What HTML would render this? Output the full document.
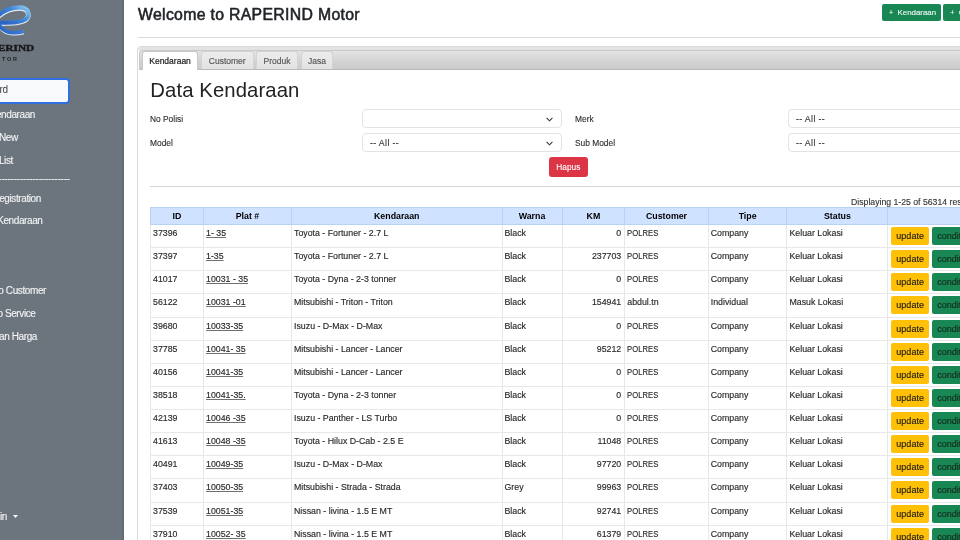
<!DOCTYPE html>
<html><head><meta charset="utf-8">
<style>
*{box-sizing:border-box;margin:0;padding:0}
html,body{width:960px;height:540px;overflow:hidden;background:#fff;will-change:transform;font-family:"Liberation Sans",sans-serif;color:#212529}
.abs{position:absolute}
#sb{position:absolute;left:0;top:0;width:124px;height:540px;background:#6c757d}
#sb .edge{position:absolute;left:122px;top:0;width:2px;height:540px;background:#656b73}
.si{position:absolute;color:#f3f4f5;-webkit-text-stroke:0.12px #f3f4f5;font-size:10px;letter-spacing:-0.4px;white-space:nowrap;line-height:12px;text-align:right}
#title{position:absolute;left:138px;top:4.5px;font-size:15.8px;font-weight:normal;letter-spacing:0.32px;-webkit-text-stroke:0.55px #212529;color:#212529;white-space:nowrap;line-height:20px}
.hr{position:absolute;height:1px;background:#dcdcdc}
.gbtn{position:absolute;top:3.8px;height:17px;background:#198754;border-radius:2px;color:#eef8f2;-webkit-text-stroke:0.12px #eef8f2;font-size:7.9px;line-height:17.6px;white-space:nowrap;overflow:hidden}
.gbtn i{font-style:normal;display:inline-block;width:8.5px;font-size:7px}
#tabs{position:absolute;left:137px;top:46px;width:840px;height:520px;border:1px solid #d9d9d9;border-radius:4px 0 0 0;background:#fff}
#tstrip{position:absolute;left:0;top:0;width:840px;height:3px;background:#e3e3e3;border-radius:3px 0 0 0}
#thead{position:absolute;left:0.8px;top:2.5px;width:840px;height:20.5px;border-radius:3px 0 0 0;background:linear-gradient(#e4e4e4 0%,#d2d2d2 60%,#cbcbcb 100%);border:1px solid #c9c9c9;border-bottom-color:#bababa;border-right:none}
.tab{position:absolute;top:0.3px;height:18.2px;border:1px solid #d3d3d3;border-bottom:none;border-radius:3px 3px 0 0;background:linear-gradient(#ececec,#e2e2e2);color:#555;font-size:8.5px;line-height:18px;text-align:center;white-space:nowrap;-webkit-text-stroke:0.15px #555}
.tab.act{background:#fff;border-color:#c8c8c8;color:#212121;height:19.5px;-webkit-text-stroke:0.2px #212121}
#dk{position:absolute;left:150.3px;top:77.5px;font-size:20.3px;letter-spacing:0.1px;color:#222;white-space:nowrap;line-height:24px}
.lbl{position:absolute;font-size:8.4px;color:#2a2a2a;white-space:nowrap;line-height:10px;-webkit-text-stroke:0.1px #2a2a2a}
.sel{position:absolute;height:19px;border:1px solid #e3e3e3;border-radius:4px;background:#fff;font-size:8.8px;letter-spacing:0.35px;color:#333;line-height:18px;padding-left:7px;white-space:nowrap;-webkit-text-stroke:0.1px #333}
.chev{position:absolute;right:8.5px;top:7px;width:7px;height:5px}
#hapus{position:absolute;left:549px;top:157.3px;width:38.7px;height:19.5px;border-radius:3px;background:#dc3545;color:#fff;font-size:8.3px;line-height:20.5px;-webkit-text-stroke:0.1px #fff;text-align:center}
#disp{position:absolute;left:851px;top:197px;font-size:8.7px;color:#333;-webkit-text-stroke:0.12px #333;white-space:nowrap;line-height:10px}
table{position:absolute;left:150px;top:207px;width:857.5px;border-collapse:collapse;table-layout:fixed;font-size:8.8px;color:#2a2a2a}
th{background:#cfe2ff;border:1px solid #b9d3f7;height:17px;font-weight:bold;text-align:center;color:#000;padding:0;line-height:15px}
td{-webkit-text-stroke:0.15px #2a2a2a;border:1px solid #e8e8e8;height:23.13px;vertical-align:top;padding:3px 2px 0 2px;line-height:10px;white-space:nowrap;overflow:hidden}
td a{color:#2a2a2a;text-decoration:underline;text-decoration-color:#707070;text-decoration-thickness:0.8px;text-decoration-skip-ink:none;text-underline-offset:0.6px}
td.r{text-align:right;padding-right:3px}
.pol{display:inline-block;transform:scaleX(0.865);transform-origin:0 0;letter-spacing:0.1px}
td.b{padding:2px 0 0 2.7px}
.upd{display:inline-block;width:38px;height:18px;background:#ffc107;border-radius:2px;color:#1e1a0a;font-size:9px;line-height:18px;text-align:center;vertical-align:top}
.cnd{display:inline-block;width:50px;height:18px;background:#198754;border-radius:2px;color:#0a2a17;font-size:9px;line-height:18px;margin-left:3px;padding-left:5px;vertical-align:top}
</style></head><body>
<div id="sb">
  <div class="edge"></div>
  <svg class="abs" style="left:0;top:0" width="124" height="70" viewBox="0 0 124 70">
    <defs>
      <linearGradient id="lg" x1="0" y1="0.6" x2="1" y2="0"><stop offset="0" stop-color="#2a64c4"/><stop offset="0.55" stop-color="#3f86d8"/><stop offset="1" stop-color="#8ccbf0"/></linearGradient>
      <linearGradient id="lg2" x1="0" y1="0" x2="1" y2="0"><stop offset="0" stop-color="#2d66c2"/><stop offset="1" stop-color="#3c7ad2"/></linearGradient>
    </defs>
    <path d="M-3 17.6 C4 11 12 8.3 20 8.3 C26 8.3 28.8 11.8 28.3 15.8 C27.8 20 23 22.2 16 22.9 C10 23.4 3 23.5 -3 23.7" stroke="#e4ebf3" stroke-width="4.8" fill="none"/>
    <path d="M-3 16.6 C4 10 12 7.4 20 7.4 C26 7.4 29 11.1 28.5 15.3 C28 19.5 23 21.4 16 22.1 C10 22.6 3 22.7 -3 22.9" stroke="url(#lg)" stroke-width="4.1" fill="none"/>
    <path d="M-1 25 C2 30.3 7 33.2 12.5 33.4 C16.5 33.6 20 33.2 23.7 32.2" stroke="#e4ebf3" stroke-width="4.3" fill="none"/>
    <path d="M-1.3 24.3 C1.8 29.6 6.8 32.4 12.5 32.6 C16.5 32.8 20 32.4 23.7 31.4" stroke="url(#lg2)" stroke-width="3.7" fill="none"/>
    <text x="-2.3" y="50.9" textLength="36.6" lengthAdjust="spacingAndGlyphs" font-family="Liberation Serif" font-weight="bold" font-size="8.8" fill="#15181c" stroke="#15181c" stroke-width="0.35">ERIND</text>
    <text x="18.7" y="61" text-anchor="end" font-family="Liberation Sans" font-weight="bold" font-size="5.5" fill="#1d2126" letter-spacing="1.7">MOTOR</text>
  </svg>
  <div class="abs" style="left:-4px;top:78px;width:73.5px;height:26px;border:2px solid #2f6fe0;border-radius:4px;background:#f8f9fa"></div>
  <div class="si" style="left:-0.5px;top:84px;color:#222;text-align:left">rd</div>
  <div class="si r" style="right:89px;top:109px">Kendaraan</div>
  <div class="si" style="left:-1.1px;top:132px;text-align:left">New</div>
  <div class="si" style="left:-1.1px;top:155px;text-align:left">List</div>
  <div class="si r" style="right:54px;top:173px;letter-spacing:-0.2px">-----------------------------------</div>
  <div class="si" style="left:-0.8px;top:193px;text-align:left">egistration</div>
  <div class="si r" style="right:81.5px;top:215px">Kendaraan</div>
  <div class="si r" style="right:78px;top:285px">Info Customer</div>
  <div class="si r" style="right:88.5px;top:308px">Info Service</div>
  <div class="si r" style="right:87px;top:331px">Perubahan Harga</div>
  <div class="si" style="left:0px;top:511px;text-align:left">in</div>
  <svg class="abs" style="left:13px;top:514.5px" width="6" height="4"><path d="M0 0 H5 L2.5 3 Z" fill="#f8f9fa"/></svg>
</div>

<div id="title">Welcome to RAPERIND Motor</div>
<div class="gbtn" style="left:882px;width:59.3px;padding-left:7px"><i>+</i>Kendaraan</div>
<div class="gbtn" style="left:943.3px;width:50px;padding-left:7px"><i>+</i>Customer</div>
<div class="hr" style="left:138px;top:37px;width:822px"></div>

<div id="tabs">
  <div id="tstrip"></div>
  <div id="thead">
    <div class="tab act" style="left:2px;width:56.5px">Kendaraan</div>
    <div class="tab" style="left:61px;width:52.8px">Customer</div>
    <div class="tab" style="left:116px;width:42.5px">Produk</div>
    <div class="tab" style="left:161px;width:32.2px">Jasa</div>
  </div>
</div>
<div id="dk">Data Kendaraan</div>

<div class="lbl" style="left:150px;top:114.2px">No Polisi</div>
<div class="lbl" style="left:150px;top:138.2px">Model</div>
<div class="lbl" style="left:575px;top:114.2px">Merk</div>
<div class="lbl" style="left:575px;top:138.2px">Sub Model</div>
<div class="sel" style="left:362px;top:109px;width:200px"><svg class="chev" viewBox="0 0 7 5"><path d="M0.6 0.8 L3.5 3.8 L6.4 0.8" stroke="#333" stroke-width="1.1" fill="none"/></svg></div>
<div class="sel" style="left:362px;top:133px;width:200px">-- All --<svg class="chev" viewBox="0 0 7 5"><path d="M0.6 0.8 L3.5 3.8 L6.4 0.8" stroke="#333" stroke-width="1.1" fill="none"/></svg></div>
<div class="sel" style="left:788px;top:109px;width:200px">-- All --</div>
<div class="sel" style="left:788px;top:133px;width:200px">-- All --</div>
<div id="hapus">Hapus</div>
<div class="hr" style="left:150px;top:186px;width:810px;background:#d4d4d4"></div>
<div id="disp">Displaying 1-25 of 56314 results</div>

<table>
<colgroup><col style="width:53px"><col style="width:88px"><col style="width:210.5px"><col style="width:60px"><col style="width:62.75px"><col style="width:83.5px"><col style="width:78.7px"><col style="width:101px"><col style="width:120px"></colgroup>
<tr><th>ID</th><th>Plat #</th><th>Kendaraan</th><th>Warna</th><th>KM</th><th>Customer</th><th>Tipe</th><th>Status</th><th></th></tr>
<tr><td>37396</td><td><a>1- 35</a></td><td>Toyota - Fortuner - 2.7 L</td><td>Black</td><td class="r">0</td><td><span class="pol">POLRES</span></td><td>Company</td><td>Keluar Lokasi</td><td class="b"><span class="upd">update</span><span class="cnd">condition</span></td></tr>
<tr><td>37397</td><td><a>1-35</a></td><td>Toyota - Fortuner - 2.7 L</td><td>Black</td><td class="r">237703</td><td><span class="pol">POLRES</span></td><td>Company</td><td>Keluar Lokasi</td><td class="b"><span class="upd">update</span><span class="cnd">condition</span></td></tr>
<tr><td>41017</td><td><a>10031 - 35</a></td><td>Toyota - Dyna - 2-3 tonner</td><td>Black</td><td class="r">0</td><td><span class="pol">POLRES</span></td><td>Company</td><td>Keluar Lokasi</td><td class="b"><span class="upd">update</span><span class="cnd">condition</span></td></tr>
<tr><td>56122</td><td><a>10031 -01</a></td><td>Mitsubishi - Triton - Triton</td><td>Black</td><td class="r">154941</td><td>abdul.tn</td><td>Individual</td><td>Masuk Lokasi</td><td class="b"><span class="upd">update</span><span class="cnd">condition</span></td></tr>
<tr><td>39680</td><td><a>10033-35</a></td><td>Isuzu - D-Max - D-Max</td><td>Black</td><td class="r">0</td><td><span class="pol">POLRES</span></td><td>Company</td><td>Keluar Lokasi</td><td class="b"><span class="upd">update</span><span class="cnd">condition</span></td></tr>
<tr><td>37785</td><td><a>10041- 35</a></td><td>Mitsubishi - Lancer - Lancer</td><td>Black</td><td class="r">95212</td><td><span class="pol">POLRES</span></td><td>Company</td><td>Keluar Lokasi</td><td class="b"><span class="upd">update</span><span class="cnd">condition</span></td></tr>
<tr><td>40156</td><td><a>10041-35</a></td><td>Mitsubishi - Lancer - Lancer</td><td>Black</td><td class="r">0</td><td><span class="pol">POLRES</span></td><td>Company</td><td>Keluar Lokasi</td><td class="b"><span class="upd">update</span><span class="cnd">condition</span></td></tr>
<tr><td>38518</td><td><a>10041-35.</a></td><td>Toyota - Dyna - 2-3 tonner</td><td>Black</td><td class="r">0</td><td><span class="pol">POLRES</span></td><td>Company</td><td>Keluar Lokasi</td><td class="b"><span class="upd">update</span><span class="cnd">condition</span></td></tr>
<tr><td>42139</td><td><a>10046 -35</a></td><td>Isuzu - Panther - LS Turbo</td><td>Black</td><td class="r">0</td><td><span class="pol">POLRES</span></td><td>Company</td><td>Keluar Lokasi</td><td class="b"><span class="upd">update</span><span class="cnd">condition</span></td></tr>
<tr><td>41613</td><td><a>10048 -35</a></td><td>Toyota - Hilux D-Cab - 2.5 E</td><td>Black</td><td class="r">11048</td><td><span class="pol">POLRES</span></td><td>Company</td><td>Keluar Lokasi</td><td class="b"><span class="upd">update</span><span class="cnd">condition</span></td></tr>
<tr><td>40491</td><td><a>10049-35</a></td><td>Isuzu - D-Max - D-Max</td><td>Black</td><td class="r">97720</td><td><span class="pol">POLRES</span></td><td>Company</td><td>Keluar Lokasi</td><td class="b"><span class="upd">update</span><span class="cnd">condition</span></td></tr>
<tr><td>37403</td><td><a>10050-35</a></td><td>Mitsubishi - Strada - Strada</td><td>Grey</td><td class="r">99963</td><td><span class="pol">POLRES</span></td><td>Company</td><td>Keluar Lokasi</td><td class="b"><span class="upd">update</span><span class="cnd">condition</span></td></tr>
<tr><td>37539</td><td><a>10051-35</a></td><td>Nissan - livina - 1.5 E MT</td><td>Black</td><td class="r">92741</td><td><span class="pol">POLRES</span></td><td>Company</td><td>Keluar Lokasi</td><td class="b"><span class="upd">update</span><span class="cnd">condition</span></td></tr>
<tr><td>37910</td><td><a>10052- 35</a></td><td>Nissan - livina - 1.5 E MT</td><td>Black</td><td class="r">61379</td><td><span class="pol">POLRES</span></td><td>Company</td><td>Keluar Lokasi</td><td class="b"><span class="upd">update</span><span class="cnd">condition</span></td></tr>
<tr><td>37911</td><td><a>10053- 35</a></td><td>Nissan - livina - 1.5 E MT</td><td>Black</td><td class="r">61379</td><td><span class="pol">POLRES</span></td><td>Company</td><td>Keluar Lokasi</td><td class="b"><span class="upd">update</span><span class="cnd">condition</span></td></tr>
</table>
</body></html>
